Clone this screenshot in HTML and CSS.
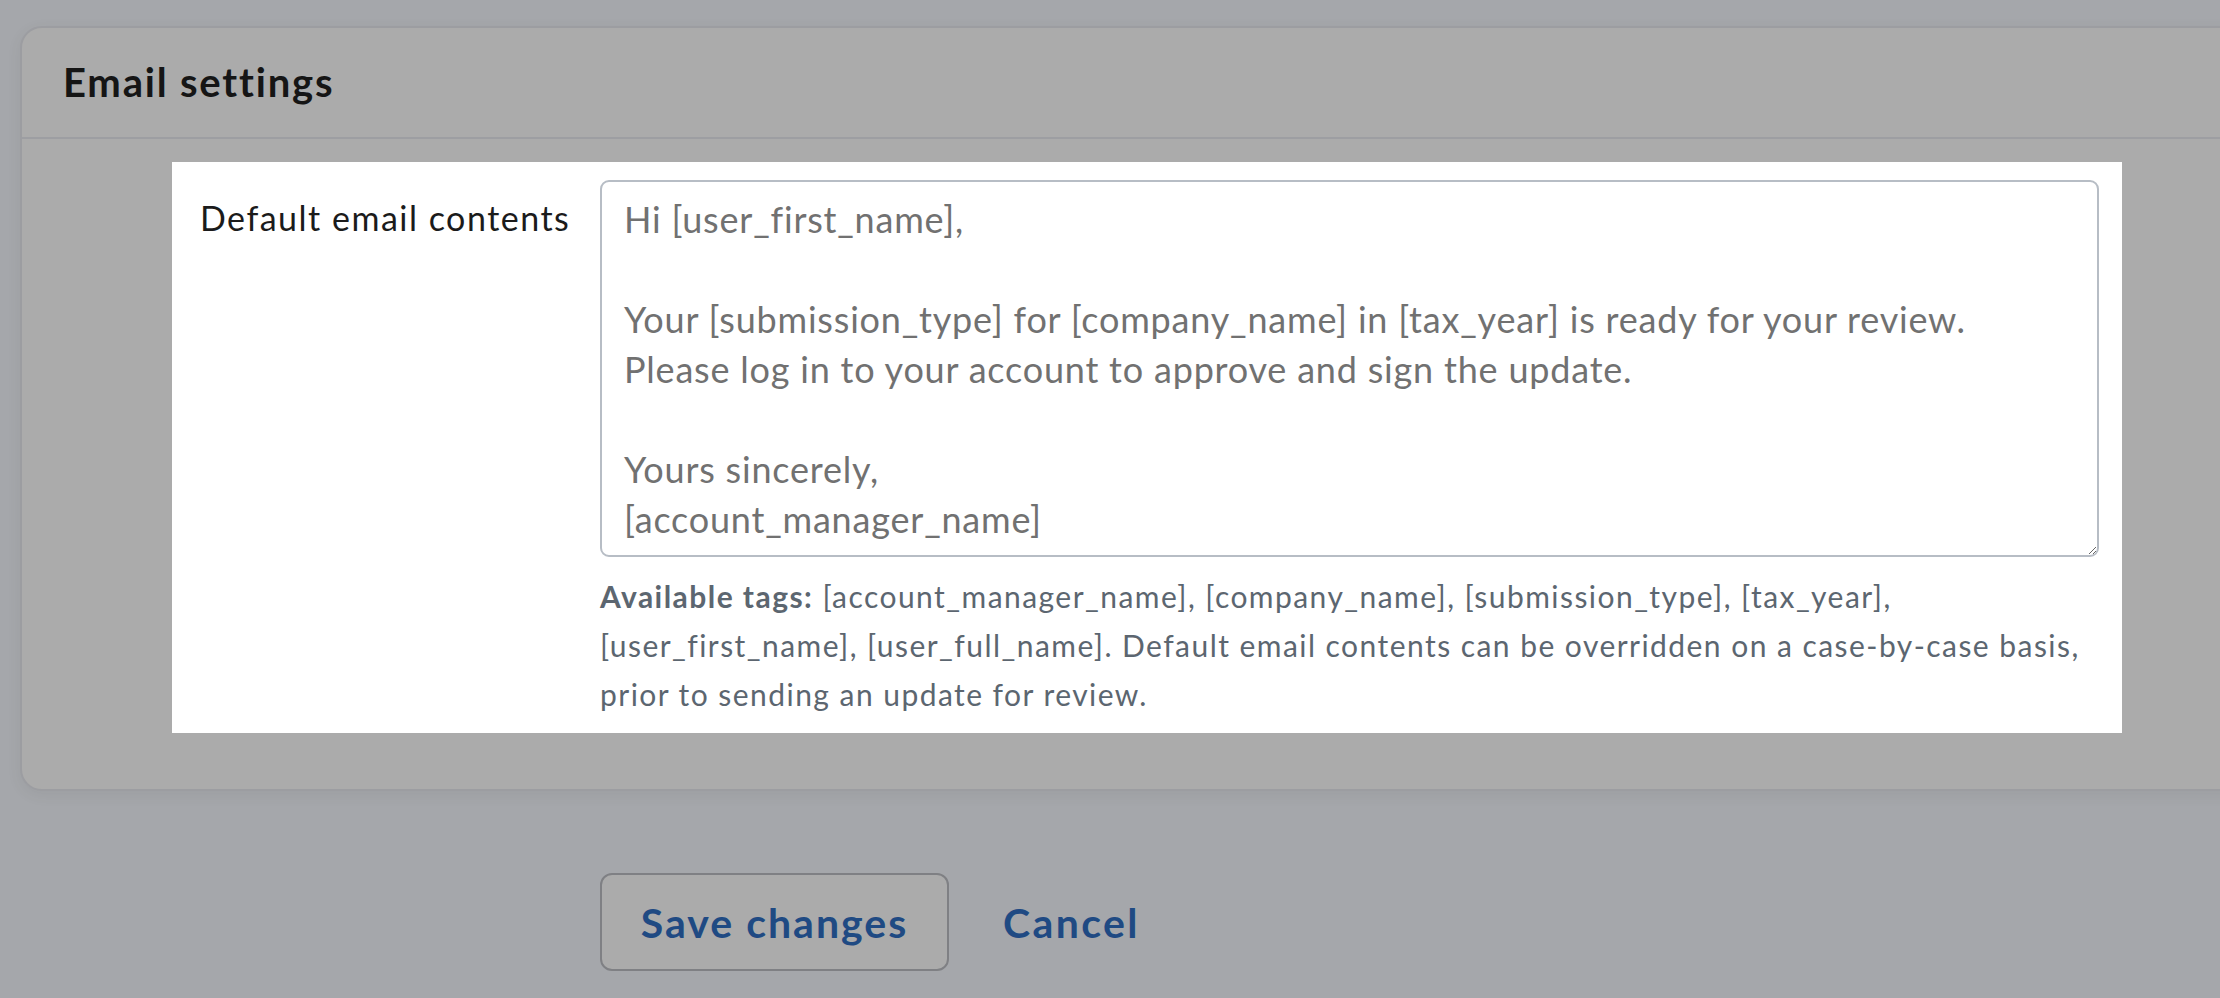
FILE: index.html
```html
<!DOCTYPE html>
<html lang="en">
<head>
<meta charset="utf-8">
<title>Email settings</title>
<link rel="stylesheet" href="styles.css">
</head>
<body>
<div class="page">
  <section class="card">
    <header class="card-header">
      <h2 class="card-title">Email settings</h2>
    </header>
    <div class="card-body">
      <div class="field">
        <label class="field-label" for="email-contents">Default email contents</label>
        <div class="field-control">
          <textarea id="email-contents" class="textarea" spellcheck="false">Hi [user_first_name],

Your [submission_type] for [company_name] in [tax_year] is ready for your review.
Please log in to your account to approve and sign the update.

Yours sincerely,
[account_manager_name]</textarea>
          <p class="help"><span class="help-key">Available tags:</span><span class="help-text"> [account_manager_name], [company_name], [submission_type], [tax_year], [user_first_name], [user_full_name]. Default email contents can be overridden on a case-by-case basis, prior to sending an update for review.</span></p>
        </div>
      </div>
    </div>
  </section>
  <div class="actions">
    <button class="btn" type="button">Save changes</button>
    <a class="link" href="#">Cancel</a>
  </div>
</div>
</body>
</html>
```

FILE: styles.css
```css
html, body {
  margin: 0;
  padding: 0;
}

body {
  background: #a5a7ab;
  font-family: "Lato", "Noto Sans", sans-serif;
  overflow: hidden;
}

.page {
  padding-top: 26px;
}

.card {
  margin-left: 20px;
  margin-right: -60px;
  background: #ababab;
  border: 2px solid #9c9da1;
  border-radius: 22px;
  box-shadow: 0 4px 14px rgba(60, 62, 70, 0.08);
}

.card-header {
  padding: 30px 41px 31px;
  border-bottom: 2px solid #9d9ea2;
}

.card-title {
  margin: 0;
  font-size: 40px;
  line-height: 48px;
  font-weight: 700;
  letter-spacing: 1.8px;
  color: #151515;
}

.card-body {
  padding: 23px 0 56px 150px;
}

.field {
  width: 1950px;
  box-sizing: border-box;
  background: #ffffff;
  padding: 18px 23px 14px 28px;
  display: grid;
  grid-template-columns: 400px 1fr;
  align-items: start;
}

.field-label {
  padding-top: 13px;
  font-size: 34px;
  line-height: 50px;
  letter-spacing: 1.5px;
  color: #1b1b1b;
}

.field-control {
  display: flex;
  flex-direction: column;
}

.textarea {
  box-sizing: border-box;
  width: 100%;
  height: 377px;
  margin: 0;
  padding: 12px 22px 6px;
  border: 2px solid #b7bdc5;
  border-radius: 9px;
  font-family: "Lato", "Noto Sans", sans-serif;
  font-size: 36px;
  line-height: 50px;
  letter-spacing: 0.8px;
  color: #717171;
  background: #ffffff;
  resize: vertical;
  overflow: hidden;
}

.help {
  margin: 15px 0 0;
  font-size: 30px;
  line-height: 49px;
  letter-spacing: 1.45px;
  color: #5c6670;
}

.help-key {
  font-weight: 700;
}

.actions {
  display: flex;
  align-items: center;
  gap: 54px;
  margin-top: 82px;
  padding-left: 600px;
}

.btn {
  box-sizing: border-box;
  width: 349px;
  height: 98px;
  border: 2px solid #7f8084;
  border-radius: 12px;
  background: #ababab;
  font-family: "Lato", "Noto Sans", sans-serif;
  font-size: 41px;
  font-weight: 700;
  letter-spacing: 2px;
  color: #1f4a83;
  padding: 0;
}

.link {
  font-size: 41px;
  font-weight: 700;
  letter-spacing: 2.4px;
  color: #1f4a83;
  text-decoration: none;
}
```
